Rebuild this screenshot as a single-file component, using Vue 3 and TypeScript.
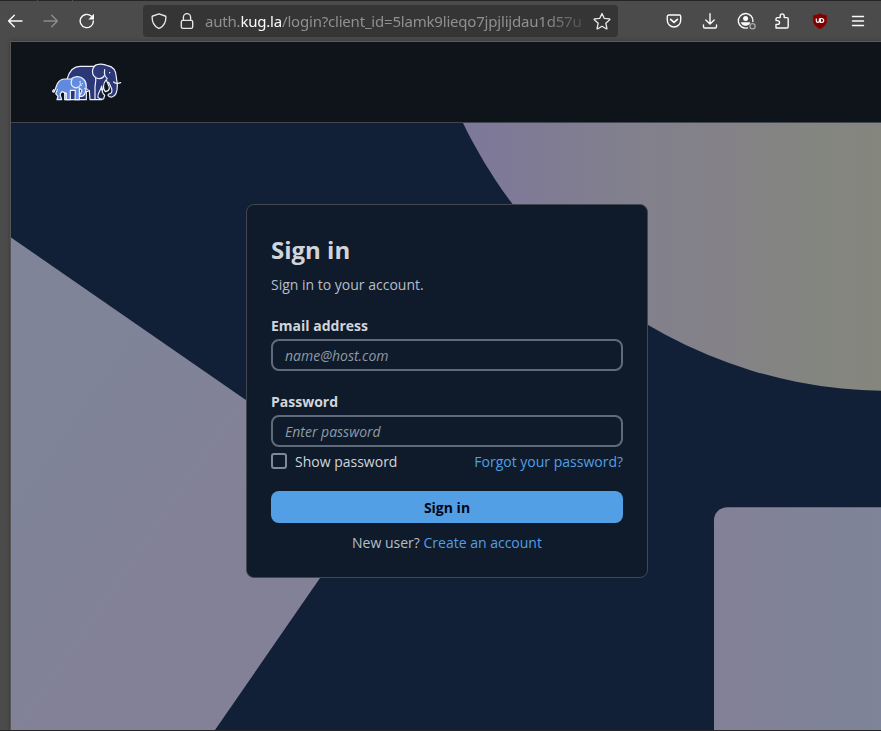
<script setup lang="ts">
import { ref } from 'vue'

const email = ref('')
const password = ref('')
const showPassword = ref(false)
</script>

<template>
  <div class="window">
    <div class="tabline"><i></i><i></i></div>
    <div class="toolbar">
      <div class="nav">
        <svg width="16" height="16" viewBox="0 0 16 16" class="ico"><path d="M15 8H2M7.3 2.3 1.6 8l5.7 5.7" /></svg>
        <svg width="16" height="16" viewBox="0 0 16 16" class="ico dim"><path d="M1 8h13M8.7 2.3 14.4 8l-5.7 5.7" /></svg>
        <svg width="16" height="16" viewBox="0 0 16 16" class="ico"><path d="M14.4 8A6.6 6.6 0 1 1 12.2 3.1" /><path d="M15 .8v5.7H9.3z" class="solid" /></svg>
      </div>
      <div class="urlbar">
        <svg width="16" height="16" viewBox="0 0 16 16" class="ico thin"><path d="M8 .8 14.2 3c.5.2.7.5.7.9 0 5-1.500 8.800-6.200 11.200-.5.2-.9.200-1.400 0C2.600 12.700 1.100 8.900 1.100 3.900c0-.4.2-.7.7-.9z" /></svg>
        <svg width="16" height="16" viewBox="0 0 16 16" class="ico thin lock"><rect x="2.300" y="7.400" width="11.400" height="7.900" rx="1.600" /><path d="M4.400 7.200V4.200a3.600 3.600 0 0 1 7.200 0v3" /></svg>
        <div class="url">auth.<b>kug.la</b>/login?client_id=5lamk9lieqo7jpjlijdau1d57u</div>
        <svg width="18" height="18" viewBox="0 0 18 18" class="ico thin star"><path d="m9 1.500 2.200 4.800 5.200.6c.5.1.6.5.3.8l-3.900 3.500 1.100 5.100c.1.500-.3.700-.7.500L9 14.200l-4.200 2.600c-.4.200-.8 0-.7-.5l1.100-5.100-3.900-3.500c-.3-.3-.2-.7.3-.8l5.200-.6z" /></svg>
      </div>
      <div class="tools">
        <svg width="16" height="16" viewBox="0 0 16 16" class="ico"><path d="M2.700 2h10.600c.8 0 1.400.6 1.400 1.400v3.900a6.700 6.700 0 0 1-13.400 0V3.400C1.300 2.600 1.900 2 2.700 2z" /><path d="m4.600 6.300 3.400 3 3.400-3" class="bold" /></svg>
        <svg width="16" height="16" viewBox="0 0 16 16" class="ico"><path d="M8 .8v10M3.800 6.900 8 11l4.200-4.100M1.500 12v1.700c0 .8.500 1.300 1.300 1.300h10.400c.8 0 1.300-.5 1.300-1.300V12" /></svg>
        <svg width="19" height="18" viewBox="0 0 19 18" class="ico"><path d="M10.500 15.900A7.300 7.300 0 1 1 15.900 9.500" /><circle cx="8.600" cy="6.500" r="2.500" class="solid" /><path d="M4 10.200h9.200c0 2-2.200 3.500-4.600 3.500S4 12.200 4 10.200z" class="solid" /><circle cx="15.500" cy="14.300" r="2.600" class="badge" /></svg>
        <svg width="16" height="16" viewBox="0 0 16 16" class="ico"><path d="M2 15h10.900c.8 0 1.300-.5 1.300-1.300V5.900c0-.8-.5-1.300-1.300-1.300h-2.700V2.900a2 2 0 0 0-4 0v1.700H3.300c-.8 0-1.300.5-1.300 1.300v1.700h1.600a1.900 1.900 0 0 1 0 3.800H2z" /></svg>
        <svg width="16" height="16" viewBox="0 0 16 16" class="shield"><path d="M8 .3c2 1.400 4.300 1.800 6.800 2v5.200c0 4-2.700 6.500-6.800 8.400-4.100-1.900-6.800-4.400-6.800-8.400V2.300C3.700 2.100 6 1.700 8 .3z" fill="#800000" stroke="#981313" stroke-width=".5" /><path d="M4.300 5.400v2.300c0 2.300 3.100 2.300 3.100 0V5.400m1 .1v3.800h1.200c2.800 0 2.800-3.800 0-3.800z" fill="none" stroke="#fff" stroke-width="1.200" /></svg>
        <svg width="16" height="16" viewBox="0 0 16 16" class="ico"><path d="M2.500 3.500h11M2.500 8h11M2.500 12.500h11" /></svg>
      </div>
    </div>

    <div class="page">
      <header class="masthead">
        <svg class="logo" width="72" height="41" viewBox="0 0 216 123">
          <g stroke="#eef1fa" stroke-width="3.600" stroke-linejoin="round" stroke-linecap="round">
            <path fill="#2b3777" d="M46 46C53 22 68 10 84 10h42c8-8 27-9 41-2 17 3 25 16 26 34 0 8 3 14 3 25 0 18-4 33-16 35-9 1-15-5-10-9 9 0 11-6 9-16l-9-19c-6 0-11 3-13 9l-8 20v23h-16l-2-1-1 1h-16l-2-27-9 3v24H38V70z" />
            <path fill="#172442" d="M149 69c-1 13-14 21-11 34 4 4 11 7 17 4l3-10c-9-6-9-18-9-28z" />
            <path fill="#101620" d="M163 50c-11 11-11 30-2 36 5-1 10-4 11-10 0-9-6-14-9-26z" />
            <path fill="#2d3a7c" d="M132 6c-15 10-13 32 0 38 10 5 20 2 25-6" />
            <path fill="none" d="M158 20c-2 11-1 20 8 27M185 57c8 7 14 5 21 2M131 46c2 9-2 16-2 28v34" />
            <path fill="#6089df" d="M5 80c-5 4-3 10 2 6 3-6 5-16 9-24 5-9 13-14 23-14h19c8-9 27-10 36 0 9 8 10 18 8 29-1 15-7 25-16 23-5-1-5-5-1-6l5-12-8-7v35H69l1-28H55v28H42l1-19-13-5-5 6v5l4 13H15l3-10-7-8 5-12" />
            <path fill="#648de0" d="M60 49c-7 13 0 23 9 25 8 2 12-2 16-8" />
            <path fill="none" stroke-width="3" d="M84 55c-1 7 2 10 5 13M98 77l10 2M41 90l2 18" />
          </g>
          <circle cx="173" cy="29" r="2.200" fill="#fff" /><circle cx="91" cy="61" r="1.800" fill="#fff" />
        </svg>
      </header>
      <main class="stage">
        <svg class="backdrop" width="870" height="607" viewBox="11 123 870 607" aria-hidden="true">
          <defs>
            <linearGradient id="disc" gradientUnits="userSpaceOnUse" x1="463" x2="881" y1="0" y2="0"><stop offset="0" stop-color="#7e789a" /><stop offset=".13" stop-color="#7f7a96" /><stop offset=".4" stop-color="#81808d" /><stop offset=".66" stop-color="#848286" /><stop offset=".8" stop-color="#838581" /><stop offset="1" stop-color="#85877e" /></linearGradient>
            <linearGradient id="tilt" gradientUnits="userSpaceOnUse" x1="80" y1="390" x2="240" y2="500"><stop offset="0" stop-color="#7f8499" /><stop offset="1" stop-color="#838198" /></linearGradient>
            <linearGradient id="tile"><stop offset="0" stop-color="#838198" /><stop offset="1" stop-color="#7e8499" /></linearGradient>
          </defs>
          <circle cx="888" cy="-80.500" r="471.200" fill="url(#disc)" />
          <path d="M11 237.500 379.300 492.200 215 730H11z" fill="url(#tilt)" />
          <path d="M714 730V520.300a13 13 0 0 1 13-13h154V730z" fill="url(#tile)" />
        </svg>
        <form class="card" @submit.prevent>
          <h1>Sign in</h1>
          <p class="lead">Sign in to your account.</p>
          <label class="name" for="email">Email address</label>
          <input id="email" v-model="email" class="field" type="text" placeholder="name@host.com" />
          <label class="name second" for="password">Password</label>
          <input id="password" v-model="password" class="field" :type="showPassword ? 'text' : 'password'" placeholder="Enter password" />
          <div class="options">
            <label class="show"><input v-model="showPassword" type="checkbox" />Show password</label>
            <a>Forgot your password?</a>
          </div>
          <button type="submit">Sign in</button>
          <p class="signup">New user? <a>Create an account</a></p>
        </form>
      </main>
    </div>
  </div>
</template>

<style>
body { background: #4b4b4b; overflow: hidden; }
</style>

<style scoped>
* { box-sizing: border-box; }
.window { width: 881px; height: 731px; display: flex; flex-direction: column; background: #4b4b4b; border-bottom: 1px solid #252525; font-family: "Open Sans", "Noto Sans", sans-serif; font-size: 14px; overflow: hidden; }
.tabline { height: 1px; flex: none; background: #252525; display: flex; gap: 34px; padding-left: 37px; }
.tabline i { width: 1px; background: #555; }
.toolbar { height: 40px; flex: none; display: flex; align-items: center; padding-left: 7px; }
.ico { fill: none; stroke: #fbfbfe; stroke-width: 1.400; stroke-linecap: round; stroke-linejoin: round; flex: none; }
.ico.dim { stroke: #8c8c8c; }
.ico.thin { stroke-width: 1.350; stroke: #e7e7e7; }
.ico .solid { fill: #fbfbfe; stroke: none; }
.ico .bold { stroke-width: 1.700; }
.ico .badge { stroke: #aaa; stroke-width: 1.300; }
.nav { display: flex; gap: 20px; width: 136px; }
.urlbar { width: 475px; height: 32px; border-radius: 4px; background: #353535; display: flex; align-items: center; padding-left: 8px; }
.lock { margin-left: 12px; }
.url { width: 384px; flex: none; margin-left: 10px; overflow: hidden; white-space: nowrap; font-family: "Noto Sans", sans-serif; font-size: 15px; letter-spacing: -.2px; line-height: 24px; color: #909090; -webkit-mask-image: linear-gradient(90deg, #000 340px, transparent 392px); mask-image: linear-gradient(90deg, #000 340px, transparent 392px); }
.url b { font-weight: 400; color: #fbfbfe; }
.star { margin-left: 4px; }
.tools { display: flex; align-items: center; margin-left: 48px; }
.tools svg:nth-child(2) { margin-left: 20px; }
.tools svg:nth-child(3) { margin-left: 19px; }
.tools svg:nth-child(4) { margin-left: 18px; }
.tools svg:nth-child(5) { margin-left: 22px; }
.tools svg:nth-child(6) { margin-left: 22px; }
.page { margin-left: 10px; flex: 1; min-height: 0; display: flex; flex-direction: column; border-left: 1px solid #555; border-top: 1px solid #5b5b5b; box-shadow: 0 0 4px rgba(0, 0, 0, .25); }
.masthead { height: 81px; flex: none; background: #0f141a; border-bottom: 1px solid #424650; padding: 21px 0 0 41px; }
.logo { display: block; }
.stage { flex: 1; min-height: 0; position: relative; background: #112036; display: flex; align-items: flex-start; padding: 81px 0 0 235px; }
.backdrop { position: absolute; left: 0; top: 0; }
.card { position: relative; width: 402px; height: 374px; border: 1px solid #424650; border-radius: 8px; background: #0f1b2a; padding: 30px 24px 0; display: flex; flex-direction: column; color: #d1d5db; line-height: 20px; }
h1 { margin: 0; font-size: 24px; line-height: 30px; font-weight: 700; color: #d1d5db; }
.lead { margin: 10px 0 21px; color: #b6bec9; }
.name { font-weight: 700; margin-bottom: 3px; }
.name.second { margin-top: 21px; }
.field { height: 32px; width: 100%; border: 2px solid #5f6b7a; border-radius: 8px; background: #0f1b2a; padding: 0 12px; color: #d1d5db; font: inherit; outline: none; }
.field::placeholder { font-style: italic; color: #8d99a8; opacity: 1; }
.options { display: flex; justify-content: space-between; margin-top: 5px; }
.show { display: flex; align-items: center; }
.show input { appearance: none; margin: -2px 8px 0 0; width: 16px; height: 16px; border: 2px solid #7d8998; border-radius: 3px; }
a { color: #539fe5; }
button { height: 32px; margin-top: 19px; border: 0; border-radius: 8px; background: #539fe5; color: #000716; font: 700 14px "Open Sans", sans-serif; padding: 0; }
.signup { margin: 10px 0 0; text-align: center; color: #b6bec9; }
</style>
